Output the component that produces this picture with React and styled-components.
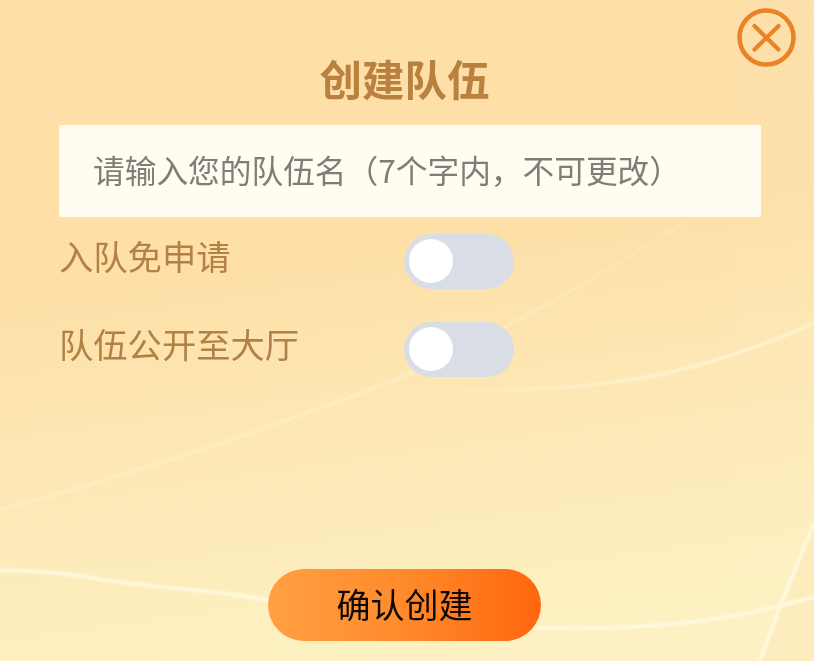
import React from "react";
import styled, { createGlobalStyle } from "styled-components";

const GlobalStyle = createGlobalStyle`
  html, body {
    margin: 0;
    padding: 0;
  }
  body {
    font-family: "Noto Sans CJK SC", "Noto Sans", sans-serif;
  }
`;

const Page = styled.div`
  position: relative;
  width: 814px;
  height: 661px;
  overflow: hidden;
  background: linear-gradient(172deg, #fddfa8 0%, #fddfa7 38%, #fde8b5 62%, #fdf0c1 88%, #fdf1c4 100%);
`;

const Waves = styled.svg`
  position: absolute;
  inset: 0;
`;

const SoftLines = styled.g`
  filter: blur(1px);
`;

const Content = styled.div`
  position: relative;
  box-sizing: border-box;
  height: 100%;
  padding: 48px 53px 20px 59px;
  display: flex;
  flex-direction: column;
`;

const Title = styled.h1`
  margin: 0 0 17px;
  padding-right: 11px;
  height: 60px;
  line-height: 60px;
  font-size: 42.5px;
  font-weight: 700;
  color: #b8813f;
  text-align: center;
`;

const NameInput = styled.div`
  height: 92px;
  box-sizing: border-box;
  padding: 0 0 4px 34px;
  display: flex;
  align-items: center;
  background: #fffdf2;
  border-radius: 2px;
  color: #7f7e75;
  font-size: 31.7px;
  white-space: nowrap;
`;

const Options = styled.div`
  margin-top: 17px;
  display: flex;
  flex-direction: column;
  gap: 33px;
`;

const Option = styled.div`
  display: grid;
  grid-template-columns: 345px 110px;
  align-items: center;
  height: 55px;
`;

const OptionLabel = styled.span`
  padding-bottom: 12px;
  font-size: 34.3px;
  line-height: 43px;
  color: #b28146;
  white-space: nowrap;
`;

const Switch = styled.div`
  width: 110px;
  height: 55px;
  box-sizing: border-box;
  padding: 5px;
  border-radius: 28px;
  background: #d9dee6;
`;

const Knob = styled.div`
  width: 44px;
  height: 44px;
  border-radius: 50%;
  background: #ffffff;
`;

const ConfirmButton = styled.button`
  margin: auto 0 0 209px;
  align-self: flex-start;
  width: 273px;
  height: 72px;
  border: 0;
  padding: 0 0 2px;
  border-radius: 36px;
  background: linear-gradient(90deg, #ffa044 0%, #ff8a2b 50%, #ff660f 100%);
  color: #0f0a05;
  font-family: inherit;
  font-size: 34px;
  line-height: 70px;
`;

const CloseButton = styled.button`
  position: absolute;
  top: 8px;
  left: 737px;
  width: 59px;
  height: 59px;
  border: 0;
  padding: 0;
  background: none;
`;

const CloseIcon = () => (
  <svg width="59" height="59" viewBox="0 0 59 59" fill="none" stroke="#ea8226" strokeLinecap="round">
    <circle cx="29.5" cy="29.5" r="27" strokeWidth="4.5" />
    <path d="M17.5 18L41.5 41.5M41.5 18L17.5 41.5" strokeWidth="4.2" />
  </svg>
);

const BackgroundWaves = () => (
  <Waves width="814" height="661" viewBox="0 0 814 661" fill="none">
    <defs>
      <linearGradient id="fadeLeft" gradientUnits="userSpaceOnUse" x1="400" y1="0" x2="660" y2="0">
        <stop offset="0" stopColor="#fff6d6" stopOpacity="0" />
        <stop offset="1" stopColor="#fff6d6" stopOpacity="0.8" />
      </linearGradient>
      <linearGradient id="fadeUp" gradientUnits="userSpaceOnUse" x1="0" y1="510" x2="700" y2="213">
        <stop offset="0" stopColor="#fff4cf" stopOpacity="0.6" />
        <stop offset="0.6" stopColor="#fff4cf" stopOpacity="0.55" />
        <stop offset="1" stopColor="#fff4cf" stopOpacity="0.2" />
      </linearGradient>
    </defs>
    <path d="M735 0L814 0L814 661L735 661Z" fill="#fff3cf" opacity="0.08" />
    <path d="M780 607L814 523L814 661L760 661Z" fill="#fde6b4" opacity="0.35" />
    <SoftLines>
      <path d="M0 510C130 475 260 432 395 380C500 335 600 275 700 213" stroke="url(#fadeUp)" strokeWidth="3" />
      <path d="M415 390C510 392 600 388 667 373C715 362 765 345 814 323" stroke="url(#fadeLeft)" strokeWidth="3.5" />
      <path d="M0 570C50 571 80 575 104 580C160 588 210 590 268 600C350 615 470 627 560 628C620 629 680 625 727 617C750 614 770 608 814 597" stroke="#fff9e2" strokeWidth="4" opacity="0.9" />
      <path d="M814 523L780 607L760 661" stroke="#fffbe6" strokeWidth="3.5" opacity="0.9" />
    </SoftLines>
  </Waves>
);

export default function App() {
  return (
    <Page>
      <GlobalStyle />
      <BackgroundWaves />
      <Content>
        <Title>创建队伍</Title>
        <NameInput>请输入您的队伍名（7个字内，不可更改）</NameInput>
        <Options>
          <Option>
            <OptionLabel>入队免申请</OptionLabel>
            <Switch><Knob /></Switch>
          </Option>
          <Option>
            <OptionLabel>队伍公开至大厅</OptionLabel>
            <Switch><Knob /></Switch>
          </Option>
        </Options>
        <ConfirmButton>确认创建</ConfirmButton>
      </Content>
      <CloseButton aria-label="关闭">
        <CloseIcon />
      </CloseButton>
    </Page>
  );
}
